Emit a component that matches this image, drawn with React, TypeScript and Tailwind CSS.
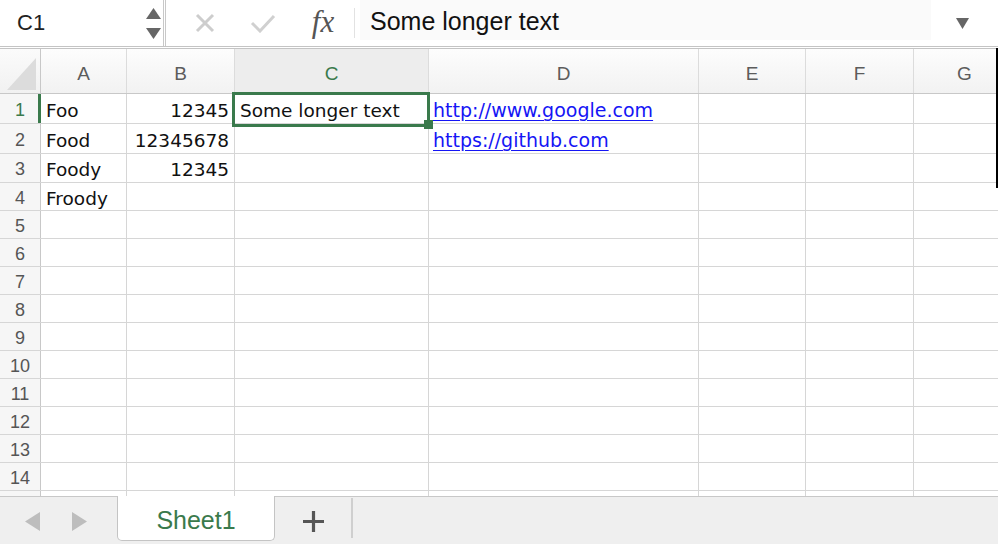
import React from "react";

const GREEN = "#3a7a4c";

type Cell = { t: string; align?: "l" | "r"; link?: boolean };

const cols = [
  { l: "A", w: 86 },
  { l: "B", w: 108 },
  { l: "C", w: 194 },
  { l: "D", w: 270 },
  { l: "E", w: 107 },
  { l: "F", w: 108 },
  { l: "G", w: 102 },
];

const rowHeights = [30, 30, 29, 28, 28, 28, 28, 28, 28, 28, 28, 28, 28, 28, 28];

const data: Record<number, Record<number, Cell>> = {
  0: {
    0: { t: "Foo" },
    1: { t: "12345", align: "r" },
    2: { t: "Some longer text" },
    3: { t: "http://www.google.com", link: true },
  },
  1: {
    0: { t: "Food" },
    1: { t: "12345678", align: "r" },
    3: { t: "https://github.com", link: true },
  },
  2: {
    0: { t: "Foody" },
    1: { t: "12345", align: "r" },
  },
  3: {
    0: { t: "Froody" },
  },
};

const cellFont = { fontFamily: '"DejaVu Sans", sans-serif' } as const;
const uiFont = { fontFamily: '"Liberation Sans", Arial, sans-serif' } as const;

export default function App() {
  return (
    <div className="relative w-[998px] h-[544px] bg-white overflow-hidden flex flex-col" style={uiFont}>
      {/* Formula bar */}
      <div className="h-[49px] shrink-0 flex border-b-[3px] border-double border-[#c4c4c4]">
        <div className="w-[166px] shrink-0 flex items-center border-r-[3px] border-double border-[#c8c8c8]">
          <span className="pl-[17px] text-[22px] text-[#222] leading-none">C1</span>
          <div className="ml-auto mr-[2px] w-[16px] h-[46px] flex flex-col items-center justify-center gap-[9px]">
            <svg width="15" height="11" viewBox="0 0 15 11">
              <polygon points="7.5,0 15,11 0,11" fill="#666" />
            </svg>
            <svg width="15" height="11" viewBox="0 0 15 11">
              <polygon points="0,0 15,0 7.5,11" fill="#666" />
            </svg>
          </div>
        </div>
        <div className="flex items-center pl-[12px]">
          <div className="w-[54px] flex justify-center">
            <svg width="22" height="22" viewBox="0 0 22 22">
              <path d="M3 3 L19 19 M19 3 L3 19" stroke="#cdcdcd" strokeWidth="3" />
            </svg>
          </div>
          <div className="w-[4px]" />
          <div className="w-[54px] flex justify-center">
            <svg width="26" height="20" viewBox="0 0 26 20">
              <path d="M2 10 L10 18 L24 3" stroke="#d0d0d0" strokeWidth="3" fill="none" />
            </svg>
          </div>
          <div className="w-[6px]" />
          <div className="w-[54px] flex justify-center">
            <span
              className="text-[31px] italic text-[#555] leading-none pb-[3px]"
              style={{ fontFamily: '"Liberation Serif", "Times New Roman", serif' }}
            >
              fx
            </span>
          </div>
          <div className="ml-[4px] w-px h-[30px] bg-[#e2e2e2]" />
        </div>
        <div className="ml-[5px] w-[571px] h-[40px] self-start bg-[#fafafa] flex items-center pl-[10px] pt-[2px]">
          <span className="text-[25px] text-[#111] leading-none">Some longer text</span>
        </div>
        <div className="flex-1 flex items-center justify-center pr-[4px]">
          <svg width="13" height="11" viewBox="0 0 13 11">
            <polygon points="0,0 13,0 6.5,11" fill="#666" />
          </svg>
        </div>
      </div>

      {/* Grid */}
      <div className="relative h-[447px] shrink-0 overflow-hidden">
        {/* Header row */}
        <div className="flex h-[45px] border-b border-[#c8c8c8]">
          <div className="w-[41px] shrink-0 border-r border-[#c8c8c8] bg-gradient-to-b from-[#fbfbfb] to-[#f1f1f1] relative">
            <svg className="absolute left-0 top-0" width="40" height="44" viewBox="0 0 40 44">
              <polygon points="7,41 36,41 36,9" fill="#dcdcdc" />
            </svg>
          </div>
          {cols.map((c) => (
            <div
              key={c.l}
              className={`shrink-0 flex items-center justify-center pt-[7px] border-r border-[#dcdcdc] text-[19px] ${
                c.l === "C"
                  ? "bg-[#ededed] text-[#3a7a4c]"
                  : "bg-gradient-to-b from-[#fdfdfd] to-[#f2f2f2] text-[#5c5c5c]"
              }`}
              style={{ width: c.w }}
            >
              {c.l}
            </div>
          ))}
        </div>

        {/* Rows */}
        {rowHeights.map((h, r) => (
          <div key={r} className="flex border-b border-[#d6d6d6]" style={{ height: h }}>
            <div
              className={`w-[41px] shrink-0 flex items-center justify-center pt-[3px] bg-[#f6f6f6] text-[18px] ${
                r === 0
                  ? "border-r-[3px] border-[#3a7a4c] text-[#3a7a4c] pl-[2px]"
                  : "border-r border-[#c8c8c8] text-[#555]"
              }`}
            >
              {r < 14 ? r + 1 : ""}
            </div>
            {cols.map((c, ci) => {
              const cell = data[r]?.[ci];
              return (
                <div
                  key={c.l}
                  className={`shrink-0 flex items-center pt-[4px] border-r border-[#d6d6d6] overflow-hidden whitespace-nowrap text-[18.5px] ${
                    cell?.align === "r" ? "justify-end pr-[5px]" : "justify-start pl-[5px]"
                  }`}
                  style={{ width: c.w, ...cellFont }}
                >
                  {cell ? (
                    cell.link ? (
                      <span className="text-[19px] text-[#1515f5] underline underline-offset-[3px] -ml-[1px]">{cell.t}</span>
                    ) : (
                      <span className="text-[#111]">{cell.t}</span>
                    )
                  ) : null}
                </div>
              );
            })}
          </div>
        ))}

        {/* Selection overlay */}
        <div
          className="absolute left-[232px] top-[43px] w-[198px] h-[35px] border-[3px]"
          style={{ borderColor: GREEN }}
        />
        <div className="absolute left-[424px] top-[71px] w-[9px] h-[9px]" style={{ background: GREEN }} />
      </div>

      {/* Sheet tabs bar */}
      <div className="flex-1 flex bg-[#efefef] border-t border-[#c8c8c8]">
        <div className="w-[117px] shrink-0 flex items-center pt-[2px]">
          <svg className="ml-[25px]" width="15" height="19" viewBox="0 0 15 19">
            <polygon points="15,0 15,19 0,9.5" fill="#bdbdbd" />
          </svg>
          <svg className="ml-[32px]" width="15" height="19" viewBox="0 0 15 19">
            <polygon points="0,0 0,19 15,9.5" fill="#bdbdbd" />
          </svg>
        </div>
        <div className="-mt-px w-[158px] h-[45px] shrink-0 bg-white border-x border-b border-[#c4c4c4] rounded-b-[5px] flex items-center justify-center pt-[5px]">
          <span className="text-[25px] leading-none" style={{ color: GREEN }}>
            Sheet1
          </span>
        </div>
        <div className="w-[76px] shrink-0 flex items-center justify-center pt-[2px]">
          <svg width="21" height="21" viewBox="0 0 21 21">
            <path d="M10.5 0 V21 M0 10.5 H21" stroke="#555" strokeWidth="3.2" />
          </svg>
        </div>
        <div className="mt-[1px] h-[40px] w-0 border-l-2 border-[#cfcfcf]" />
      </div>

      {/* right window edge */}
      <div className="absolute right-0 top-[48px] w-[2px] h-[140px] bg-black" />
    </div>
  );
}
